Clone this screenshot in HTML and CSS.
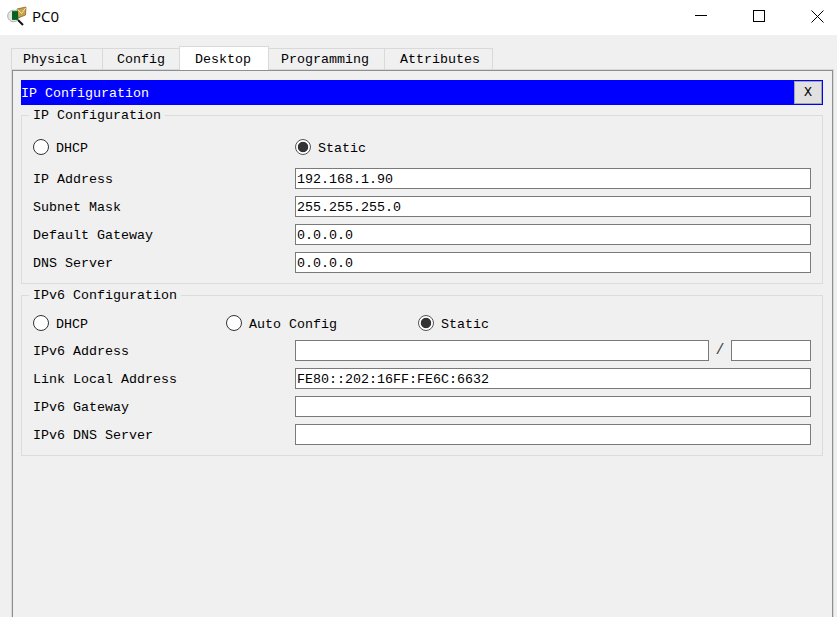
FILE: index.html
```html
<!DOCTYPE html>
<html lang="en">
<head>
<meta charset="utf-8">
<title>PC0</title>
<link rel="stylesheet" href="styles.css">
</head>
<body>
<div class="window">
  <header class="titlebar">
    <div class="title">
      <svg class="app-icon" width="20" height="20" viewBox="0 0 20 20">
        <circle cx="6.5" cy="10" r="5.8" fill="#e6e6e6" stroke="#a9b0ae"/>
        <path d="M10 3 L19 1 L18.5 9 L11 12 Z" fill="#c9a24a" stroke="#6d5520" stroke-width=".7"/>
        <path d="M10.5 3.5 L14.5 7.5 L19 1.5" fill="none" stroke="#f3e2a8" stroke-width="1"/>
        <rect x="5" y="5" width="6" height="9" fill="#0d7a2a"/>
        <path d="M6 6v7M8 6v7M10 6v7" stroke="#063d14" stroke-width=".8"/>
        <path d="M11 14 L16 19" stroke="#111" stroke-width="2"/>
      </svg>
      <span>PC0</span>
    </div>
    <div class="controls">
      <svg width="12" height="12" viewBox="0 0 12 12"><path d="M0 5.5H12" stroke="#000"/></svg>
      <svg width="12" height="12" viewBox="0 0 12 12"><rect x=".5" y=".5" width="11" height="11" fill="none" stroke="#000"/></svg>
      <svg width="13" height="13" viewBox="0 0 13 13"><path d="M.5 .5L12.5 12.5M12.5 .5L.5 12.5" stroke="#000" fill="none"/></svg>
    </div>
  </header>
  <main class="content">
    <nav class="tabs">
      <div class="tab tab-physical">Physical</div>
      <div class="tab tab-config">Config</div>
      <div class="tab tab-desktop active">Desktop</div>
      <div class="tab tab-programming">Programming</div>
      <div class="tab tab-attributes">Attributes</div>
    </nav>
    <section class="panel">
      <div class="panel-inner">
        <div class="bar">
          <span>IP Configuration</span>
          <button class="close" type="button">X</button>
        </div>
        <fieldset class="group group-v4">
          <legend>IP Configuration</legend>
          <div class="radios radios-v4">
            <label class="radio"><i class="dot"></i>DHCP</label>
            <label class="radio"><i class="dot on"></i>Static</label>
          </div>
          <div class="rows">
            <div class="row"><span>IP Address</span><div class="field">192.168.1.90</div></div>
            <div class="row"><span>Subnet Mask</span><div class="field">255.255.255.0</div></div>
            <div class="row"><span>Default Gateway</span><div class="field">0.0.0.0</div></div>
            <div class="row"><span>DNS Server</span><div class="field">0.0.0.0</div></div>
          </div>
        </fieldset>
        <fieldset class="group group-v6">
          <legend>IPv6 Configuration</legend>
          <div class="radios radios-v6">
            <label class="radio"><i class="dot"></i>DHCP</label>
            <label class="radio"><i class="dot"></i>Auto Config</label>
            <label class="radio"><i class="dot on"></i>Static</label>
          </div>
          <div class="rows">
            <div class="row"><span>IPv6 Address</span>
              <div class="split"><div class="field"></div><span class="slash">/</span><div class="field"></div></div>
            </div>
            <div class="row"><span>Link Local Address</span><div class="field">FE80::202:16FF:FE6C:6632</div></div>
            <div class="row"><span>IPv6 Gateway</span><div class="field"></div></div>
            <div class="row"><span>IPv6 DNS Server</span><div class="field"></div></div>
          </div>
        </fieldset>
      </div>
    </section>
  </main>
</div>
</body>
</html>
```
FILE: styles.css
```css
* { box-sizing: border-box; }
html, body { margin: 0; height: 100%; overflow: hidden; }
body { background: #f0f0f0; font-family: "Liberation Mono", monospace; font-size: 13.33px; color: #000; }
.window { height: 617px; display: flex; flex-direction: column; }
.titlebar { height: 35px; flex: none; background: #fff; display: flex; justify-content: space-between; align-items: center; padding-bottom: 3px; }
.title { display: flex; align-items: center; gap: 5px; padding-left: 7px; font-family: "Open Sans", sans-serif; font-size: 15px; }
.controls { display: flex; align-items: center; gap: 46px; padding-right: 13px; }
.content { flex: 1; min-height: 0; padding: 11px 3px 0 11px; display: flex; flex-direction: column; }
.tabs { display: grid; grid-template-columns: 91px 77px 89px 116px 108px; height: 24px; flex: none; position: relative; z-index: 1; }
.tab { margin-top: 2px; height: 21px; border: 1px solid #d9d9d9; border-bottom: 0; background: #f0f0f0; display: flex; align-items: center; margin-right: -1px; line-height: 1; padding-top: 1px; }
.tab.active { margin-top: 0; height: 24px; background: #fff; position: relative; z-index: 1; padding-top: 2px; }
.tab-physical { padding-left: 11px; }
.tab-config { padding-left: 14px; }
.tab-desktop { padding-left: 15px; }
.tab-programming { padding-left: 12px; }
.tab-attributes { padding-left: 15px; }
.panel { flex: 1; margin-top: -1px; border: 1px solid #d9d9d9; border-bottom: 0; }
.panel-inner { height: 100%; border: 1px solid #8a8f94; border-bottom: 0; padding: 9px 9px 0 8px; }
.bar { height: 25px; background: #00f; color: #fff; display: flex; align-items: center; justify-content: space-between; border: 1px solid #00f; }
.bar span { margin-left: -1px; padding-top: 2px; }
.close { width: 28px; height: 23px; margin: 0; padding: 0; border: 1px solid #a6a6a6; background: #e1e1e1; color: #000; font: inherit; line-height: 1; }
.group { margin: 0; padding: 0 11px; border: 1px solid #dcdcdc; min-width: 0; }
.group legend { margin-left: -4px; padding: 0 4px; line-height: 18px; height: 16px; }
.group-v4 { margin-top: 2px; height: 177px; }
.group-v6 { margin-top: 3px; height: 169px; }
.radios { display: grid; align-items: center; }
.radios-v4 { height: 24px; margin-top: 13px; grid-template-columns: 262px 1fr; }
.radios-v6 { height: 24px; margin-top: 9px; grid-template-columns: 193px 192px 1fr; }
.radio { display: flex; align-items: center; gap: 7px; padding-top: 1px; }
.dot { width: 16px; height: 16px; border-radius: 50%; border: 1px solid #333; background: #fff; display: block; flex: none; margin-top: -4px; }
.dot.on { border-color: #555; background: radial-gradient(circle, #333 0 4.8px, #fff 5.6px); }
.rows { display: grid; gap: 7px; margin-top: 8px; }
.radios-v6 + .rows { margin-top: 4px; }
.row { display: grid; grid-template-columns: 262px 516px; height: 21px; align-items: center; }
.row > span { padding-top: 2px; }
.field { height: 21px; border: 1px solid #7a7a7a; background: #fff; padding-left: 1px; line-height: 21px; white-space: nowrap; overflow: hidden; }
.split { display: grid; grid-template-columns: 414px 22px 80px; }
.slash { text-align: center; line-height: 21px; color: #444; font-size: 15px; }
```
